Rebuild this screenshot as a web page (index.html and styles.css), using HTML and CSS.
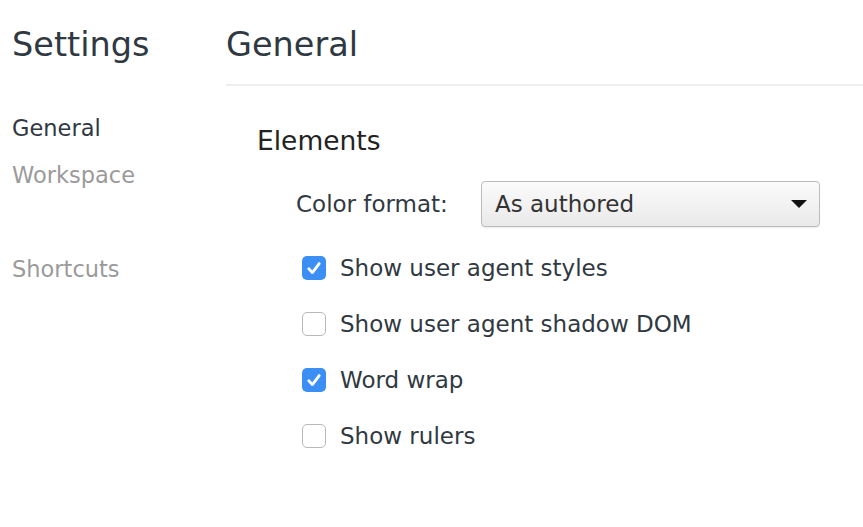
FILE: index.html
```html
<!DOCTYPE html>
<html lang="en">
<head>
<meta charset="utf-8">
<title>Settings</title>
<link rel="stylesheet" href="styles.css">
</head>
<body>
<div class="settings">
  <aside class="sidebar">
    <h1 class="sidebar-title">Settings</h1>
    <nav class="tabs">
      <div class="tab tab-active">General</div>
      <div class="tab">Workspace</div>
      <div class="tab tab-spacer"></div>
      <div class="tab">Shortcuts</div>
    </nav>
  </aside>
  <main class="content">
    <header class="content-header">
      <h2 class="content-title">General</h2>
    </header>
    <section class="group">
      <h3 class="group-title">Elements</h3>
      <div class="field">
        <label class="field-label">Color format:</label>
        <div class="select">
          <span class="select-value">As authored</span>
          <span class="select-arrow"></span>
        </div>
      </div>
      <div class="check-row">
        <span class="checkbox checked"><svg viewBox="0 0 24 24" width="24" height="24"><path d="M6.8 12.8 L10.4 16.6 L17.2 7.6" fill="none" stroke="#fff" stroke-width="2.8" stroke-linecap="round" stroke-linejoin="round"/></svg></span>
        <span class="check-label">Show user agent styles</span>
      </div>
      <div class="check-row">
        <span class="checkbox"></span>
        <span class="check-label">Show user agent shadow DOM</span>
      </div>
      <div class="check-row">
        <span class="checkbox checked"><svg viewBox="0 0 24 24" width="24" height="24"><path d="M6.8 12.8 L10.4 16.6 L17.2 7.6" fill="none" stroke="#fff" stroke-width="2.8" stroke-linecap="round" stroke-linejoin="round"/></svg></span>
        <span class="check-label">Word wrap</span>
      </div>
      <div class="check-row">
        <span class="checkbox"></span>
        <span class="check-label">Show rulers</span>
      </div>
    </section>
  </main>
</div>
</body>
</html>
```
FILE: styles.css
```css
html, body {
  margin: 0;
  padding: 0;
  background: #ffffff;
}

body {
  font-family: "DejaVu Sans", "Liberation Sans", sans-serif;
  color: #303942;
  width: 863px;
  height: 527px;
  overflow: hidden;
}

.settings {
  display: flex;
  height: 100%;
}

.sidebar {
  width: 214px;
  padding-left: 12px;
  flex: none;
}

.sidebar-title {
  margin: 25px 0 0 0;
  font-size: 33.5px;
  line-height: 40px;
  font-weight: normal;
  color: #303942;
}

.tabs {
  margin-top: 40px;
  display: flex;
  flex-direction: column;
}

.tab {
  font-size: 22.5px;
  line-height: 47px;
  height: 47px;
  color: #9a9a9a;
}

.tab-active {
  color: #303942;
}

.content {
  flex: 1;
}

.content-header {
  padding-top: 25px;
  padding-bottom: 19px;
  border-bottom: 2px solid #eeeeee;
}

.content-title {
  margin: 0;
  font-size: 33.5px;
  line-height: 40px;
  font-weight: normal;
  color: #303942;
}

.group {
  padding-left: 31px;
  padding-top: 39px;
}

.group-title {
  margin: 0;
  font-size: 26.5px;
  line-height: 32px;
  font-weight: normal;
  color: #222222;
}

.field {
  display: flex;
  align-items: center;
  margin-top: 24px;
  margin-left: 39px;
  margin-bottom: 13px;
}

.field-label {
  font-size: 23px;
  width: 185px;
  color: #303942;
}

.select {
  box-sizing: border-box;
  width: 339px;
  height: 46px;
  border: 1px solid #bcbcbc;
  border-radius: 4px;
  background: linear-gradient(#fbfbfb, #e9e9e9);
  box-shadow: 0 1px 1px rgba(0, 0, 0, 0.08);
  display: flex;
  align-items: center;
  justify-content: space-between;
  padding: 0 12px 0 13px;
}

.select-value {
  font-size: 23px;
  color: #333333;
}

.select-arrow {
  width: 0;
  height: 0;
  border-left: 8px solid transparent;
  border-right: 8px solid transparent;
  border-top: 8px solid #111111;
}

.check-row {
  display: flex;
  align-items: center;
  height: 56px;
  margin-left: 45px;
}

.checkbox {
  box-sizing: border-box;
  width: 24px;
  height: 24px;
  border-radius: 5px;
  border: 1px solid #b9b9b9;
  background: #ffffff;
  margin-right: 14px;
  flex: none;
  display: flex;
}

.checkbox.checked {
  border: none;
  background: #3a8ef4;
}

.check-label {
  font-size: 23px;
  color: #303942;
}
```
